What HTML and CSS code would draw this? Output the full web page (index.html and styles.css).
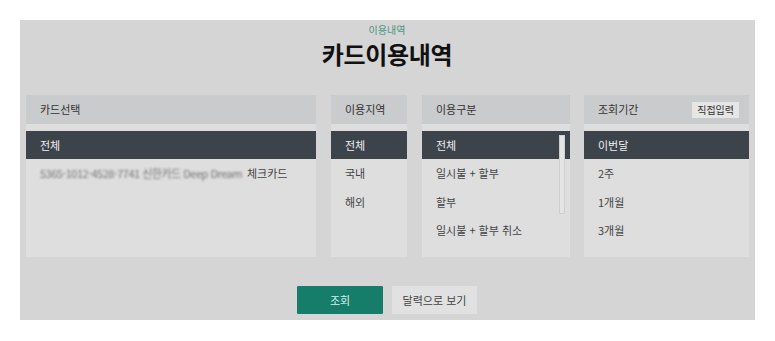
FILE: index.html
```html
<!DOCTYPE html>
<html lang="ko">
<head>
<meta charset="utf-8">
<title>카드이용내역</title>
<link rel="stylesheet" href="styles.css">
</head>
<body>
<div class="panel">
  <div class="titles">
    <div class="sub">이용내역</div>
    <h1 class="title">카드이용내역</h1>
  </div>
  <div class="cols">
    <div class="col">
      <div class="head">카드선택</div>
      <ul class="list">
        <li class="on">전체</li>
        <li><span class="blur">5365-1012-4528-7741 신한카드 Deep Dream</span><span class="kind">체크카드</span></li>
      </ul>
    </div>
    <div class="col">
      <div class="head">이용지역</div>
      <ul class="list">
        <li class="on">전체</li>
        <li>국내</li>
        <li>해외</li>
      </ul>
    </div>
    <div class="col scroll">
      <div class="head">이용구분</div>
      <ul class="list">
        <li class="on">전체</li>
        <li>일시불 + 할부</li>
        <li>할부</li>
        <li>일시불 + 할부 취소</li>
      </ul>
      <div class="thumb"></div>
    </div>
    <div class="col">
      <div class="head">조회기간 <span class="badge">직접입력</span></div>
      <ul class="list">
        <li class="on">이번달</li>
        <li>2주</li>
        <li>1개월</li>
        <li>3개월</li>
      </ul>
    </div>
  </div>
  <div class="btns">
    <button class="btn primary">조회</button>
    <button class="btn">달력으로 보기</button>
  </div>
</div>
</body>
</html>
```
FILE: styles.css
```css
html, body { margin: 0; padding: 0; background: #ffffff; }
body {
  font-family: "Noto Sans CJK KR", "Noto Sans", sans-serif;
  color: #333;
  padding: 20px 20px 0 20px;
}
.panel {
  width: 735px;
  height: 300px;
  background: #d5d5d5;
  box-sizing: border-box;
  padding: 0 7px 0 6px;
  display: flex;
  flex-direction: column;
}
.titles {
  text-align: center;
  height: 75px;
  padding-top: 3px;
  box-sizing: border-box;
}
.sub {
  font-size: 10px;
  line-height: 14px;
  color: #4a957f;
}
.title {
  margin: 2px 0 0 0;
  font-size: 24px;
  line-height: 30px;
  font-weight: 700;
  color: #111;
  letter-spacing: -0.3px;
}
.cols {
  display: grid;
  grid-template-columns: 290px 76px 148px 164px;
  column-gap: 15px;
  height: 162px;
}
.cols .col:nth-child(4) { margin-left: -1px; }
.col {
  background: #dedede;
  display: flex;
  flex-direction: column;
  position: relative;
}
.head {
  height: 29px;
  background: #cacbcc;
  font-size: 11px;
  line-height: 29px;
  padding: 0 10px 0 14px;
  display: flex;
  align-items: center;
  justify-content: space-between;
  color: #333;
}
.badge {
  background: #e6e6e6;
  font-size: 10px;
  line-height: 16px;
  padding: 0 5px;
  color: #333;
}
.list {
  list-style: none;
  margin: 7px 0 0 0;
  padding: 0;
}
.list li {
  height: 28.7px;
  line-height: 28px;
  font-size: 11px;
  padding-left: 14px;
  color: #444;
  white-space: nowrap;
}
.list li.on {
  background: #3d434b;
  color: #eef0f2;
  height: 28px;
}
.blur {
  color: #767676;
  filter: blur(1.2px);
  letter-spacing: -0.5px;
}
.kind {
  margin-left: 5px;
}
.thumb {
  position: absolute;
  left: 137px;
  top: 40px;
  width: 4px;
  height: 77px;
  background: #e4e4e4;
  border: 1px solid #cfcfcf;
  box-sizing: content-box;
}
.btns {
  display: flex;
  justify-content: center;
  gap: 9px;
  margin-top: 29px;
}
.btn {
  height: 28px;
  width: 85px;
  border: 0;
  font-family: inherit;
  font-size: 11px;
  background: #e1e1e1;
  color: #444;
  padding: 0;
}
.btn.primary {
  width: 86px;
  background: #167d6b;
  color: #d8efe9;
  border-radius: 1px;
}
```
